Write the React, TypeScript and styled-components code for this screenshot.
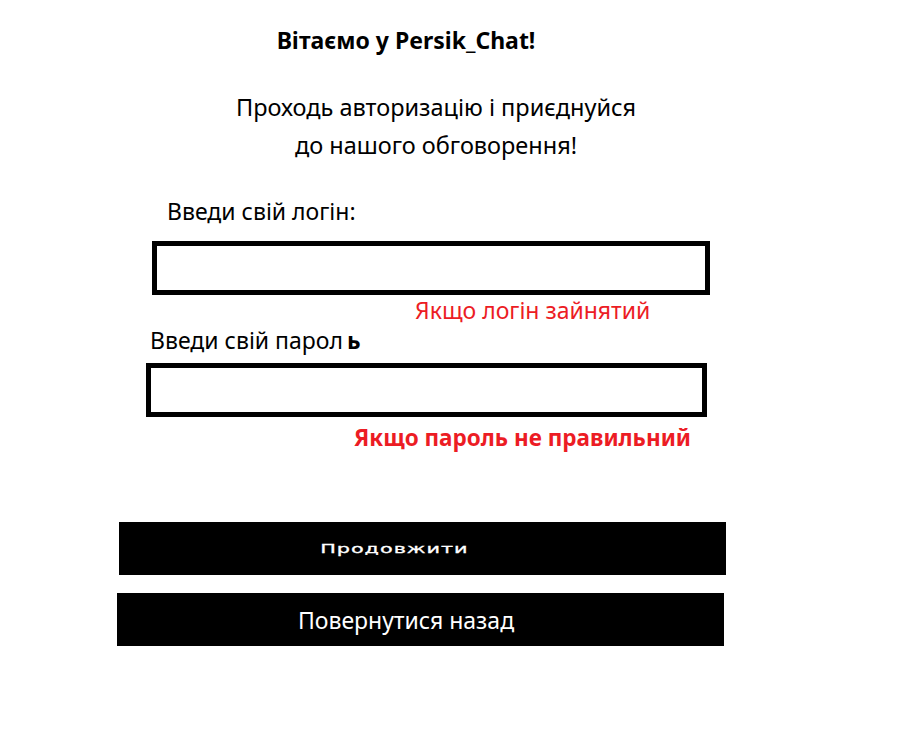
import React from "react";
import styled, { createGlobalStyle } from "styled-components";

const GlobalStyle = createGlobalStyle`
  html, body {
    margin: 0;
    padding: 0;
    background: #fff;
  }
  body {
    font-family: "Noto Sans", "Open Sans", sans-serif;
    color: #000;
  }
`;

const Page = styled.div`
  width: 924px;
  min-height: 742px;
  display: flex;
  flex-direction: column;
  align-items: flex-start;
  box-sizing: border-box;
  padding-top: 24px;
`;

const Title = styled.h1`
  margin: 0 0 0 206px;
  width: 400px;
  text-align: center;
  font-size: 23px;
  font-weight: 700;
  line-height: 32px;
`;

const Subtitle = styled.p`
  margin: 32px 0 0 136px;
  width: 600px;
  text-align: center;
  font-size: 23.5px;
  line-height: 38px;
`;

const Label = styled.label<{ $left: number; $top: number }>`
  display: block;
  margin: ${(p) => p.$top}px 0 0 ${(p) => p.$left}px;
  font-size: 23px;
  line-height: 30px;
`;

const Strong = styled.b`
  font-weight: 700;
  margin-left: 4px;
`;

const Field = styled.input<{ $left: number; $top: number; $width: number; $height: number }>`
  display: block;
  box-sizing: border-box;
  margin: ${(p) => p.$top}px 0 0 ${(p) => p.$left}px;
  width: ${(p) => p.$width}px;
  height: ${(p) => p.$height}px;
  border: 5px solid #000;
  border-radius: 0;
  padding: 0 10px;
  background: #fff;
  font-family: inherit;
  font-size: 20px;
  outline: none;
`;

const ErrorText = styled.div<{ $left: number; $top: number; $bold?: boolean }>`
  margin: ${(p) => p.$top}px 0 0 ${(p) => p.$left}px;
  color: #ec1c24;
  font-size: ${(p) => (p.$bold ? 22.5 : 23)}px;
  font-weight: ${(p) => (p.$bold ? 700 : 400)};
  line-height: 30px;
`;

const Button = styled.button<{ $left: number; $top: number; $shift: number }>`
  display: flex;
  align-items: center;
  justify-content: center;
  box-sizing: border-box;
  margin: ${(p) => p.$top}px 0 0 ${(p) => p.$left}px;
  width: 607px;
  height: 53px;
  padding: 0 ${(p) => p.$shift}px 0 0;
  border: none;
  border-radius: 0;
  background: #000;
  color: #fff;
  cursor: pointer;
  font-family: "Noto Sans", sans-serif;
  font-size: 23px;
`;

const WideText = styled.span`
  display: inline-block;
  font-family: "DejaVu Sans", sans-serif;
  font-size: 13px;
  letter-spacing: 0.6px;
  transform: scaleX(1.6);
  -webkit-text-stroke: 0.3px #fff;
`;

export default function App() {
  return (
    <>
      <GlobalStyle />
      <Page>
        <Title>Вітаємо у Persik_Chat!</Title>
        <Subtitle>
          Проходь авторизацію і приєднуйся
          <br />
          до нашого обговорення!
        </Subtitle>

        <Label $left={167} $top={32}>Введи свій логін:</Label>
        <Field $left={152} $top={15} $width={558} $height={54} />
        <ErrorText $left={415} $top={0}>Якщо логін зайнятий</ErrorText>

        <Label $left={150} $top={0}>
          Введи свій парол<Strong>ь</Strong>
        </Label>
        <Field $left={146} $top={8} $width={561} $height={54} type="password" />
        <ErrorText $left={354} $top={6} $bold>
          Якщо пароль не правильний
        </ErrorText>

        <Button $left={119} $top={69} $shift={57}>
          <WideText>Продовжити</WideText>
        </Button>
        <Button $left={117} $top={18} $shift={29}>Повернутися назад</Button>
      </Page>
    </>
  );
}
